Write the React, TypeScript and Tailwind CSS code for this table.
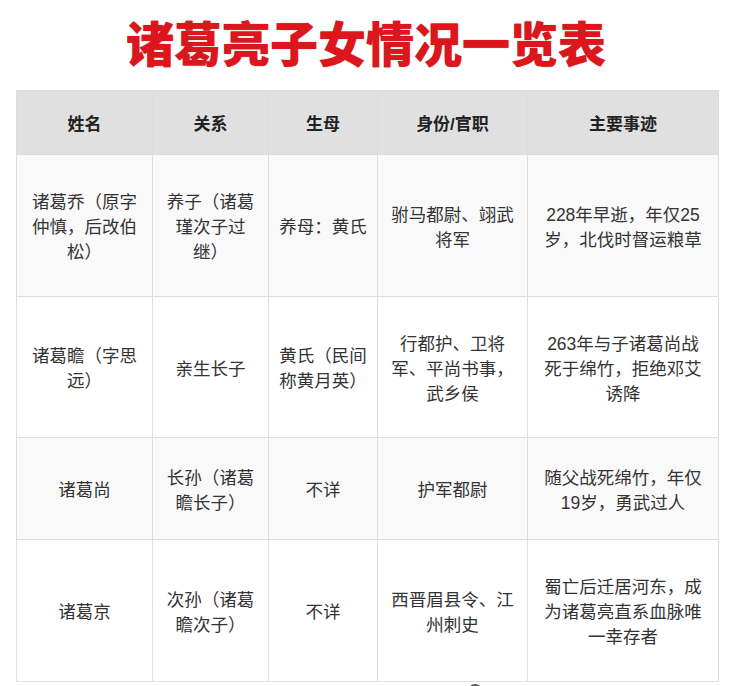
import React from 'react';

type Row = {
  bg: string;
  height: string;
  cells: string[][];
};

const headers = ['姓名', '关系', '生母', '身份/官职', '主要事迹'];
const colWidths = ['w-[136px]', 'w-[116px]', 'w-[109px]', 'w-[150px]', 'w-[191px]'];

const rows: Row[] = [
  {
    bg: 'bg-[#f9f9f9]',
    height: 'h-[142px]',
    cells: [
      ['诸葛乔（原字', '仲慎，后改伯', '松）'],
      ['养子（诸葛', '瑾次子过', '继）'],
      ['养母：黄氏'],
      ['驸马都尉、翊武', '将军'],
      ['228年早逝，年仅25', '岁，北伐时督运粮草'],
    ],
  },
  {
    bg: 'bg-white',
    height: 'h-[141px]',
    cells: [
      ['诸葛瞻（字思', '远）'],
      ['亲生长子'],
      ['黄氏（民间', '称黄月英）'],
      ['行都护、卫将', '军、平尚书事，', '武乡侯'],
      ['263年与子诸葛尚战', '死于绵竹，拒绝邓艾', '诱降'],
    ],
  },
  {
    bg: 'bg-[#f9f9f9]',
    height: 'h-[102px]',
    cells: [
      ['诸葛尚'],
      ['长孙（诸葛', '瞻长子）'],
      ['不详'],
      ['护军都尉'],
      ['随父战死绵竹，年仅', '19岁，勇武过人'],
    ],
  },
  {
    bg: 'bg-white',
    height: 'h-[142px]',
    cells: [
      ['诸葛京'],
      ['次孙（诸葛', '瞻次子）'],
      ['不详'],
      ['西晋眉县令、江', '州刺史'],
      ['蜀亡后迁居河东，成', '为诸葛亮直系血脉唯', '一幸存者'],
    ],
  },
];

const App: React.FC = () => {
  return (
    <div className="w-[732px] h-[686px] overflow-hidden bg-white font-['Liberation_Sans','Noto_Sans_CJK_SC',sans-serif]">
      {/* Title */}
      <h1 className="h-[90px] pt-[17px] text-center text-[48px] leading-[48px] font-black text-[#dc161c] [text-shadow:0_0_1px_rgba(120,0,0,0.7)] font-['Noto_Sans_CJK_SC',sans-serif]">
        诸葛亮子女情况一览表
      </h1>

      <table className="ml-[16px] w-[702px] table-fixed border-collapse text-[#333]">
        <thead>
          <tr className="h-[64px] bg-[#e0e0e0]">
            {headers.map((h, i) => (
              <th
                key={h}
                className={`${colWidths[i]} border border-[#dcdcdc] pt-[5px] text-center text-[17px] font-bold text-[#222] align-middle`}
              >
                {h}
              </th>
            ))}
          </tr>
        </thead>
        <tbody>
          {rows.map((row, r) => (
            <tr key={r} className={`${row.height} ${row.bg}`}>
              {row.cells.map((lines, c) => (
                <td
                  key={c}
                  className="border border-[#dedede] pt-[4px] text-center align-middle text-[17.5px] leading-[25px]"
                >
                  {lines.map((line, k) => (
                    <div key={k} className="whitespace-nowrap">
                      {line}
                    </div>
                  ))}
                </td>
              ))}
            </tr>
          ))}
        </tbody>
      </table>

      {/* edge of the next item peeking in at the bottom */}
      <div className="mt-[2px] ml-[468px] w-[14px] h-[14px] rounded-full bg-[#5a5a5a]" />
    </div>
  );
};

export default App;
